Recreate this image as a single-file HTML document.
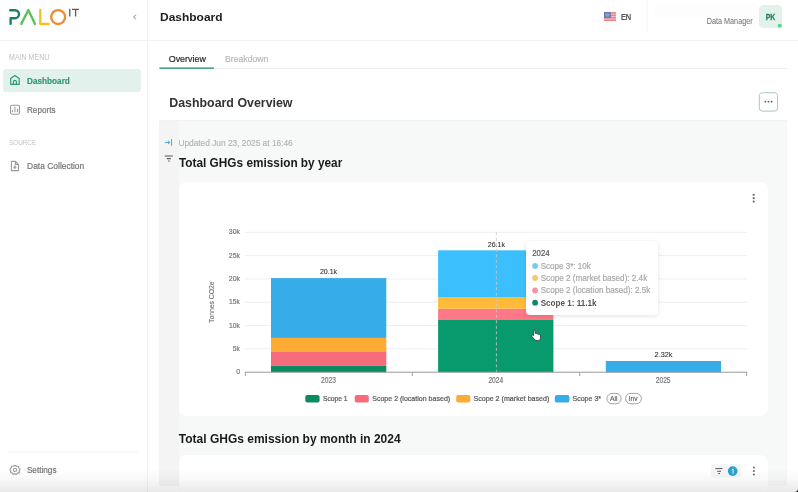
<!DOCTYPE html>
<html><head><meta charset="utf-8">
<style>
*{margin:0;padding:0;box-sizing:border-box}
html,body{width:798px;height:492px;overflow:hidden;background:#fff;font-family:"Liberation Sans",sans-serif}
body{position:relative}
.a{position:absolute}
svg text{font-family:"Liberation Sans",sans-serif}
</style></head><body>
<!-- backgrounds -->
<div class="a" style="left:159px;top:120px;width:628px;height:366px;background:#f7f8f8"></div>
<div class="a" style="left:159px;top:120px;width:19.5px;height:366px;background:#f4f4f4"></div>
<div class="a" style="left:159px;top:120px;width:628px;height:1px;background:#f1f2f2"></div>
<div class="a" style="left:178.5px;top:182px;width:589px;height:234.2px;background:#fff;border-radius:7px;box-shadow:0 0 1.5px rgba(0,0,0,0.04)"></div>
<div class="a" style="left:178.5px;top:455px;width:589px;height:40px;background:#fff;border-radius:7px;box-shadow:0 0 1.5px rgba(0,0,0,0.04)"></div>
<div class="a" style="left:3.2px;top:68.6px;width:138px;height:23px;background:#e2f1eb;border-radius:3.5px"></div>
<div class="a" style="left:759px;top:5px;width:23.2px;height:23.3px;background:#e2f2ea;border-radius:4.5px"></div>

<svg class="a" style="left:0;top:0;will-change:transform" width="798" height="492" viewBox="0 0 798 492">
<!-- structural lines -->
<rect x="147" y="0" width="1" height="492" fill="#f2f3f3"/>
<rect x="0" y="40" width="147" height="1" fill="#f0f1f1"/>
<rect x="148" y="40" width="650" height="1" fill="#f0f1f1"/>
<rect x="646.5" y="0" width="1" height="33" fill="#f3f3f3"/>
<rect x="7" y="451.5" width="131" height="1" fill="#f3f4f4"/>
<rect x="655" y="3" width="102" height="15" fill="#fdfdfd"/>
<rect x="159" y="68" width="628" height="1" fill="#f0f1f1"/>
<rect x="159.4" y="67.4" width="54.4" height="1.6" fill="#4a9e86"/>

<!-- logo -->
<g fill="none" stroke-linecap="round" stroke-linejoin="round" stroke-width="2.35">
 <path d="M10.2 10.2 H15 A4 4 0 0 1 15 18.2 H10.6 V23.8" stroke="#17805c"/>
 <path d="M21.3 23.9 L28.35 10 L35 23.9" stroke="#5dc05c"/>
 <path d="M40.3 9.9 V24 H48.6" stroke="#f6c21c"/>
 <circle cx="58.15" cy="17.05" r="6.95" stroke="#f28b30"/>
</g>
<path d="M69.8 8.8 V16.6 M72 9.45 H78.9 M75.6 8.8 V16.6" fill="none" stroke="#5a5a5a" stroke-width="1.3"/>
<path d="M135.8 15 L133.6 17 L135.8 19" fill="none" stroke="#b4b4b4" stroke-width="1.1" stroke-linecap="round" stroke-linejoin="round"/>

<!-- sidebar icons -->
<g fill="none" stroke="#2f9a74" stroke-width="1.2" stroke-linejoin="round" stroke-linecap="round">
 <path d="M10.7 84.4 V78.6 L14.9 75.4 L19.2 78.6 V84.4 Z"/>
 <path d="M13.4 84.4 V81.9 A1.5 1.5 0 0 1 16.4 81.9 V84.4"/>
</g>
<g fill="none" stroke="#9a9a9a" stroke-width="1.1" stroke-linecap="round">
 <rect x="10.5" y="105.2" width="9" height="9" rx="1.6"/>
 <path d="M12.5 110.4 V111.8 M14.9 107.4 V111.8 M17.4 109.2 V111.8"/>
</g>
<g fill="none" stroke="#9a9a9a" stroke-width="1.1" stroke-linejoin="round" stroke-linecap="round">
 <path d="M11.4 161.4 H15.6 L18.5 164.3 V170.6 H11.4 Z M15.4 161.6 V164.4 H18.3"/>
 <path d="M14.9 165.6 V168.4 M13.8 167.2 L14.9 168.4 L16 167.2"/>
</g>
<g fill="none" stroke="#9a9a9a" stroke-width="1.1" stroke-linejoin="round">
 <path d="M15 465.2 L16.5 466.3 L18.3 466.2 L18.8 467.9 L20 469.2 L19.3 470.8 L19.4 472.6 L17.7 473.1 L16.4 474.5 L15 473.8 L13.3 474.5 L12.2 473.1 L10.6 472.6 L10.7 470.8 L10 469.2 L11.2 467.9 L11.7 466.2 L13.4 466.3 Z"/>
 <circle cx="15" cy="469.9" r="1.6"/>
</g>

<!-- flag -->
<rect x="604" y="12.2" width="12" height="8.8" fill="#f4b7bd"/>
<rect x="604" y="12.2" width="12" height="1.3" fill="#e8808a"/>
<rect x="604" y="14.7" width="12" height="1.2" fill="#e8808a"/>
<rect x="604" y="17.2" width="12" height="1.2" fill="#e8808a"/>
<rect x="604" y="19.7" width="12" height="1.3" fill="#e8808a"/>
<rect x="604" y="12.2" width="6.8" height="5.7" fill="#5b72b6"/>
<rect x="605.2" y="13.4" width="4.4" height="3.3" fill="#8aa0cc"/>
<circle cx="779.8" cy="25.8" r="2" fill="#4bd983"/>

<!-- overview button -->
<rect x="759.3" y="92.9" width="18.2" height="18.4" rx="3" fill="#dcdcdc"/>
<rect x="759.3" y="92.7" width="18.2" height="18.4" rx="3" fill="#fff" stroke="#aac9c5" stroke-width="1"/>
<rect x="764.6" y="100.9" width="1.6" height="1.6" fill="#3e6e6a"/>
<rect x="767.7" y="100.9" width="1.6" height="1.6" fill="#3e6e6a"/>
<rect x="770.8" y="100.9" width="1.6" height="1.6" fill="#3e6e6a"/>

<!-- updated icon + filter -->
<path d="M165.2 142.4 H169.8 M168.2 140.9 L169.8 142.4 L168.2 143.9 M171.6 139.5 V145.3" fill="none" stroke="#35a8d6" stroke-width="0.95" stroke-linecap="round" stroke-linejoin="round"/>
<path d="M164.8 156 H172.8 M166.8 158.65 H170.8 M168.1 161 H169.7" fill="none" stroke="#555" stroke-width="1.2"/>

<!-- card kebab -->
<circle cx="753.7" cy="194.8" r="1.15" fill="#707070"/>
<circle cx="753.7" cy="198.2" r="1.15" fill="#707070"/>
<circle cx="753.7" cy="201.6" r="1.15" fill="#707070"/>

<!-- chart -->
<line x1="245" y1="348.88" x2="747" y2="348.88" stroke="#eceef2" stroke-width="1"/>
<line x1="245" y1="325.57" x2="747" y2="325.57" stroke="#eceef2" stroke-width="1"/>
<line x1="245" y1="302.25" x2="747" y2="302.25" stroke="#eceef2" stroke-width="1"/>
<line x1="245" y1="278.93" x2="747" y2="278.93" stroke="#eceef2" stroke-width="1"/>
<line x1="245" y1="255.62" x2="747" y2="255.62" stroke="#eceef2" stroke-width="1"/>
<line x1="245" y1="232.30" x2="747" y2="232.30" stroke="#eceef2" stroke-width="1"/>
<rect x="271.0" y="365.9" width="115.3" height="6.30" fill="#0c8a62"/>
<rect x="271.0" y="351.3" width="115.3" height="14.60" fill="#f56b7c"/>
<rect x="271.0" y="337.9" width="115.3" height="13.40" fill="#fcab35"/>
<rect x="271.0" y="278.1" width="115.3" height="59.80" fill="#36ade8"/>
<rect x="438.1" y="320.0" width="115.3" height="52.20" fill="#089a6c"/>
<rect x="438.1" y="308.7" width="115.3" height="11.30" fill="#ff7888"/>
<rect x="438.1" y="297.1" width="115.3" height="11.60" fill="#ffbb38"/>
<rect x="438.1" y="250.3" width="115.3" height="46.80" fill="#3cc0fd"/>
<rect x="605.8" y="361.0" width="115.3" height="11.2" fill="#36ade8"/>
<line x1="496.4" y1="232.3" x2="496.4" y2="372" stroke="#c8c8c8" stroke-width="0.9" stroke-dasharray="3 2.5" opacity="0.9"/>
<rect x="245" y="371.7" width="502" height="1" fill="#9a9a9a"/>
<path d="M245.4 372 V376 M412.3 372 V376 M579.7 372 V376 M746.6 372 V376" stroke="#9a9a9a" stroke-width="0.9"/>
<!-- legend -->
<rect x="305.3" y="395" width="14.3" height="7.6" rx="2" fill="#0c8a62"/>
<rect x="354.7" y="395" width="14.1" height="7.6" rx="2" fill="#f56b7c"/>
<rect x="456.2" y="395" width="14.1" height="7.6" rx="2" fill="#fcab35"/>
<rect x="554.8" y="395" width="14.6" height="7.6" rx="2" fill="#36ade8"/>
<rect x="606.9" y="393.4" width="14.2" height="10.4" rx="5.2" fill="none" stroke="#8a8a8a" stroke-width="0.8"/>
<rect x="625.6" y="393.4" width="15.8" height="10.4" rx="5.2" fill="none" stroke="#8a8a8a" stroke-width="0.8"/>
<text transform="translate(213.9 322.90) rotate(-90) scale(0.8465 1)" font-size="7.99" fill="#777777" stroke="#777777" stroke-width="0.15">Tonnes CO2e</text>

<!-- card2 icons -->
<rect x="711" y="463.9" width="30.3" height="13.5" rx="3.2" fill="#f4f5f5"/>
<path d="M715.3 468.6 H722.5 M717.2 471.3 H721 M718.2 473.6 H720" fill="none" stroke="#5a5a5a" stroke-width="1"/>
<circle cx="732.7" cy="471.1" r="4.85" fill="#2aa2cc"/>
<path d="M731.7 470.1 L733.1 469 V473.7" fill="none" stroke="#e8f6fb" stroke-width="1" stroke-linejoin="round"/>
<circle cx="753.9" cy="467.4" r="1" fill="#666"/>
<circle cx="753.9" cy="471" r="1" fill="#666"/>
<circle cx="753.9" cy="474.5" r="1" fill="#666"/>
</svg>

<!-- tooltip -->
<div class="a" style="left:526.2px;top:241.4px;width:131.8px;height:74px;background:#fff;border-radius:4px;box-shadow:0 1px 4px rgba(0,0,0,0.12)"></div>

<svg class="a" style="left:0;top:0;will-change:transform" width="798" height="492" viewBox="0 0 798 492">
<circle cx="535.1" cy="266" r="2.9" fill="#7dc8f0"/>
<circle cx="535.1" cy="278" r="2.9" fill="#fbc46e"/>
<circle cx="535.1" cy="290.4" r="2.9" fill="#f5939e"/>
<circle cx="535.1" cy="302.7" r="2.9" fill="#0d8a5f"/>
<text transform="translate(9.10 59.70) scale(0.8643 1)" font-size="8.14" fill="#c2c2c2" stroke="#c2c2c2" stroke-width="0">MAIN MENU</text>
<text transform="translate(27.00 83.60) scale(0.8692 1)" font-size="9.45" font-weight="bold" fill="#2f9472" stroke="#2f9472" stroke-width="0.15">Dashboard</text>
<text transform="translate(27.00 112.60) scale(0.9336 1)" font-size="8.72" fill="#767676" stroke="#767676" stroke-width="0.2">Reports</text>
<text transform="translate(9.00 145.40) scale(0.8115 1)" font-size="7.85" fill="#c2c2c2" stroke="#c2c2c2" stroke-width="0">SOURCE</text>
<text transform="translate(27.10 169.10) scale(0.9357 1)" font-size="9.01" fill="#767676" stroke="#767676" stroke-width="0.2">Data Collection</text>
<text transform="translate(26.90 472.90) scale(0.9395 1)" font-size="8.72" fill="#767676" stroke="#767676" stroke-width="0.2">Settings</text>
<text transform="translate(160.00 20.70) scale(1.0306 1)" font-size="11.63" font-weight="bold" fill="#1d1d1d" stroke="#1d1d1d" stroke-width="0">Dashboard</text>
<text transform="translate(620.90 20.10) scale(0.8548 1)" font-size="8.72" fill="#333333" stroke="#333333" stroke-width="0.2">EN</text>
<text transform="translate(706.80 24.40) scale(0.8588 1)" font-size="8.43" fill="#737373" stroke="#737373" stroke-width="0.05">Data Manager</text>
<text transform="translate(765.70 20.30) scale(0.7824 1)" font-size="8.87" font-weight="bold" fill="#22805f" stroke="#22805f" stroke-width="0.3">PK</text>
<text transform="translate(168.70 61.70) scale(0.9300 1)" font-size="9.59" fill="#262626" stroke="#262626" stroke-width="0.2">Overview</text>
<text transform="translate(225.00 61.70) scale(0.8918 1)" font-size="9.74" fill="#b9b9b9" stroke="#b9b9b9" stroke-width="0.2">Breakdown</text>
<text transform="translate(169.20 106.50) scale(0.9169 1)" font-size="13.52" font-weight="bold" fill="#333333" stroke="#333333" stroke-width="0">Dashboard Overview</text>
<text transform="translate(178.40 145.60) scale(0.8696 1)" font-size="9.59" fill="#b2b6b6" stroke="#b2b6b6" stroke-width="0.2">Updated Jun 23, 2025 at 16:46</text>
<text transform="translate(179.00 167.00) scale(0.9458 1)" font-size="12.50" font-weight="bold" fill="#1a1a1a" stroke="#1a1a1a" stroke-width="0">Total GHGs emission by year</text>
<text transform="translate(178.80 443.00) scale(0.9601 1)" font-size="12.50" font-weight="bold" fill="#1a1a1a" stroke="#1a1a1a" stroke-width="0">Total GHGs emission by month in 2024</text>
<text transform="translate(236.30 374.30) scale(0.9500 1)" font-size="7.56" fill="#777777" stroke="#777777" stroke-width="0.2">0</text>
<text transform="translate(232.80 350.98) scale(0.8905 1)" font-size="7.56" fill="#777777" stroke="#777777" stroke-width="0.2">5k</text>
<text transform="translate(229.10 327.67) scale(0.8875 1)" font-size="7.56" fill="#777777" stroke="#777777" stroke-width="0.2">10k</text>
<text transform="translate(229.10 304.35) scale(0.8875 1)" font-size="7.56" fill="#777777" stroke="#777777" stroke-width="0.2">15k</text>
<text transform="translate(228.80 281.03) scale(0.9117 1)" font-size="7.56" fill="#777777" stroke="#777777" stroke-width="0.2">20k</text>
<text transform="translate(228.80 257.72) scale(0.9117 1)" font-size="7.56" fill="#777777" stroke="#777777" stroke-width="0.2">25k</text>
<text transform="translate(228.80 234.40) scale(0.9117 1)" font-size="7.56" fill="#777777" stroke="#777777" stroke-width="0.2">30k</text>
<text transform="translate(321.00 382.50) scale(0.8089 1)" font-size="8.29" fill="#777777" stroke="#777777" stroke-width="0.2">2023</text>
<text transform="translate(488.40 382.50) scale(0.8089 1)" font-size="8.29" fill="#777777" stroke="#777777" stroke-width="0.2">2024</text>
<text transform="translate(655.70 382.50) scale(0.8089 1)" font-size="8.29" fill="#777777" stroke="#777777" stroke-width="0.2">2025</text>
<text transform="translate(319.90 274.10) scale(0.8994 1)" font-size="7.85" fill="#333333" stroke="#333333" stroke-width="0.1">20.1k</text>
<text transform="translate(487.70 246.60) scale(0.8854 1)" font-size="7.99" fill="#333333" stroke="#333333" stroke-width="0.1">26.1k</text>
<text transform="translate(654.60 357.40) scale(0.9306 1)" font-size="7.85" fill="#333333" stroke="#333333" stroke-width="0.1">2.32k</text>
<text transform="translate(322.90 400.60) scale(0.9258 1)" font-size="7.27" fill="#555555" stroke="#555555" stroke-width="0.2">Scope 1</text>
<text transform="translate(372.20 400.60) scale(0.9701 1)" font-size="7.27" fill="#555555" stroke="#555555" stroke-width="0.2">Scope 2 (location based)</text>
<text transform="translate(473.40 400.60) scale(0.9824 1)" font-size="7.27" fill="#555555" stroke="#555555" stroke-width="0.2">Scope 2 (market based)</text>
<text transform="translate(572.50 400.60) scale(0.9695 1)" font-size="7.27" fill="#555555" stroke="#555555" stroke-width="0.2">Scope 3*</text>
<text transform="translate(610.10 400.60) scale(0.9638 1)" font-size="6.98" fill="#666666" stroke="#666666" stroke-width="0.2">All</text>
<text transform="translate(628.80 400.60) scale(0.9376 1)" font-size="6.98" fill="#666666" stroke="#666666" stroke-width="0.2">Inv</text>
<text transform="translate(532.20 256.40) scale(0.9646 1)" font-size="8.14" fill="#555555" stroke="#555555" stroke-width="0.2">2024</text>
<text transform="translate(540.70 268.60) scale(0.9544 1)" font-size="8.43" fill="#a9a9a9" stroke="#a9a9a9" stroke-width="0.2">Scope 3*: 10k</text>
<text transform="translate(540.70 281.10) scale(0.9653 1)" font-size="8.43" fill="#a9a9a9" stroke="#a9a9a9" stroke-width="0.2">Scope 2 (market based): 2.4k</text>
<text transform="translate(540.70 293.40) scale(0.9664 1)" font-size="8.43" fill="#a9a9a9" stroke="#a9a9a9" stroke-width="0.2">Scope 2 (location based): 2.5k</text>
<text transform="translate(540.70 305.70) scale(0.9629 1)" font-size="8.43" font-weight="bold" fill="#555555" stroke="#555555" stroke-width="0">Scope 1: 11.1k</text>
<!-- cursor -->
<path d="M533.6 330.3 C534.3 329.8 535 330.2 535.1 331 L535.3 333.6 C535.9 333.2 536.8 333.3 537.1 334 C537.7 333.7 538.5 333.9 538.8 334.5 C539.4 334.3 540.3 334.6 540.5 335.4 L540.6 337.8 C540.5 339.2 539.8 340.1 538.8 340.4 L536 340.5 C535.2 340.4 534.6 339.7 534.1 339 L531.8 336.3 C531.4 335.8 531.7 335 532.4 335 C532.9 335 533.3 335.3 533.6 335.7 Z" fill="#fff" stroke="#222" stroke-width="0.7"/>
</svg>

<!-- bottom fade -->
<div class="a" style="left:0;top:469px;width:798px;height:23px;background:linear-gradient(to bottom,rgba(0,0,0,0) 0%,rgba(0,0,0,0.028) 45%,rgba(0,0,0,0.088) 100%)"></div>
<svg class="a" style="left:0;top:0" width="798" height="492"><path d="M794.6 492 A3.4 3.4 0 0 0 798 488.6 V492 Z" fill="#111"/></svg>
</body></html>
